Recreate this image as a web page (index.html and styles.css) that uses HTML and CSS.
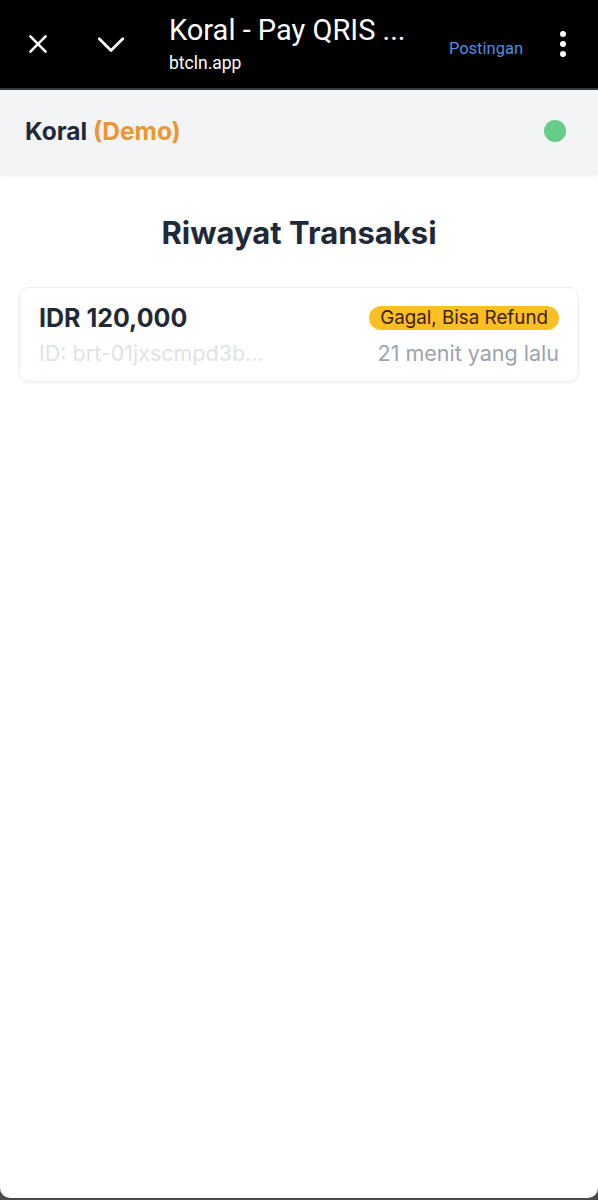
FILE: index.html
```html
<!DOCTYPE html>
<html lang="id">
<head>
    <meta charset="UTF-8">
    <meta name="viewport" content="width=device-width, initial-scale=1.0">
    <title>Koral - Pay QRIS</title>
    <link rel="stylesheet" href="styles.css">
</head>
<body>
    <div class="browser-bar">
        <svg class="bar-icon" width="26" height="26" viewBox="0 0 24 24"><path d="M5 5 L19 19 M19 5 L5 19" stroke="#fff" stroke-width="2.4" stroke-linecap="round" fill="none"/></svg>
        <svg class="bar-icon" width="30" height="26" viewBox="0 0 28 24"><path d="M3 7 L14 18 L25 7" stroke="#fff" stroke-width="2.6" stroke-linecap="round" stroke-linejoin="round" fill="none"/></svg>
        <div class="bar-title">
            <div class="bar-name">Koral - Pay QRIS ...</div>
            <div class="bar-url">btcln.app</div>
        </div>
        <a class="bar-link">Postingan</a>
        <div class="bar-menu"><span></span><span></span><span></span></div>
    </div>

    <div class="page">
        <header class="app-header">
            <div class="brand">Koral <span class="demo">(Demo)</span></div>
            <div class="status-dot"></div>
        </header>

        <main class="content">
            <h1>Riwayat Transaksi</h1>
            <div class="tx-card">
                <div class="tx-row">
                    <div class="tx-amount">IDR 120,000</div>
                    <div class="badge">Gagal, Bisa Refund</div>
                </div>
                <div class="tx-row">
                    <div class="tx-id">ID: brt-01jxscmpd3b...</div>
                    <div class="tx-time">21 menit yang lalu</div>
                </div>
            </div>
        </main>
    </div>
</body>
</html>
```

FILE: styles.css
```css
body { margin: 0; padding: 0; background-color: #4a4a4a; font-family: Inter, "Noto Sans", sans-serif; }
.browser-bar { height: 90px; box-sizing: border-box; background-color: #000; border-bottom: 2px solid #3a3a3a; display: flex; align-items: center; padding: 0 32px 0 25px; font-family: Roboto, sans-serif; }
.bar-icon { flex: none; }
.bar-icon:first-child { margin-right: 45px; }
.bar-title { flex: 1; margin-left: 43px; color: #fff; }
.bar-name { font-size: 29px; line-height: 32px; }
.bar-url { font-size: 17.5px; line-height: 22px; margin-top: 6px; }
.bar-link { color: #4d8fe0; font-size: 16.5px; margin-right: 37px; padding-top: 8px; }
.bar-menu { display: flex; flex-direction: column; gap: 4px; }
.bar-menu span { width: 6px; height: 6px; border-radius: 50%; background-color: #fff; }
.page { background-color: #fff; height: 1108px; border-radius: 0 0 10px 10px; overflow: hidden; }
.app-header { height: 85px; background-color: #f3f4f6; display: flex; align-items: center; justify-content: space-between; padding: 0 32px 4px 25px; box-sizing: border-box; box-shadow: 0 1px 3px rgba(0,0,0,0.06); }
.brand { font-size: 24.5px; font-weight: 700; color: #1f2937; }
.demo { color: #f0952e; }
.status-dot { width: 22px; height: 22px; border-radius: 50%; background-color: #66cc88; }
.content { padding: 38px 19px; }
h1 { margin: 0 0 34px; text-align: center; font-size: 31px; font-weight: 700; color: #1f2937; line-height: 40px; }
.tx-card { border: 1px solid #eceef1; border-radius: 10px; box-shadow: 0 1px 3px rgba(0,0,0,0.06); padding: 15px 19px 14px; display: flex; flex-direction: column; gap: 6px; }
.tx-row { display: flex; justify-content: space-between; align-items: center; }
.tx-amount { font-size: 25px; font-weight: 700; color: #1f2937; line-height: 30px; }
.badge { background-color: #fbbf24; color: #3b2105; font-size: 18.8px; line-height: 24px; padding: 0 11px; border-radius: 12px; }
.tx-id { color: #dfe2e6; font-size: 21.5px; line-height: 28px; }
.tx-time { color: #9ca3af; font-size: 21.5px; line-height: 28px; }
```
